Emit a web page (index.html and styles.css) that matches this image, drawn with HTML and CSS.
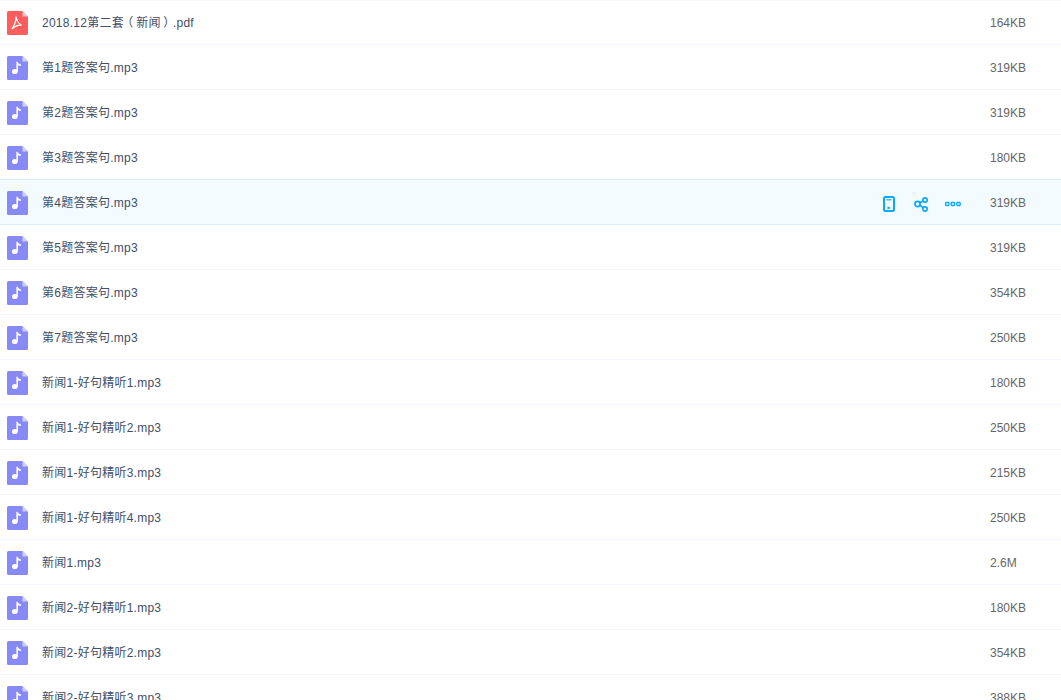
FILE: index.html
```html
<!DOCTYPE html>
<html lang="zh-CN">
<head>
<meta charset="utf-8">
<title>文件列表</title>
<link rel="stylesheet" href="styles.css">
</head>
<body>
<svg class="sprites" width="0" height="0" aria-hidden="true">
  <symbol id="pdf" viewBox="0 0 21 24">
    <path d="M1.500 0H15.500L21 5.500V22.500A1.500 1.500 0 0 1 19.500 24H1.500A1.500 1.500 0 0 1 0 22.500V1.500A1.500 1.500 0 0 1 1.500 0Z" fill="#ff5d5d"/>
    <path d="M15.500 0L21 5.500H15.500Z" fill="#ffc4c4"/>
    <path d="M9 5.500C9.200 9 8 13.500 5 18C8 15 11 14 14.500 14.200C12 13 9.800 10 9 5.500Z" fill="none" stroke="#fff" stroke-width="1.200"/>
  </symbol>
  <symbol id="mp3" viewBox="0 0 21 24">
    <path d="M1.500 0H15.500L21 5.500V22.500A1.500 1.500 0 0 1 19.500 24H1.500A1.500 1.500 0 0 1 0 22.500V1.500A1.500 1.500 0 0 1 1.500 0Z" fill="#8789f5"/>
    <path d="M15.500 0L21 5.500H15.500Z" fill="#cfd0fb"/>
    <ellipse cx="7.800" cy="15.500" rx="2.800" ry="2.600" fill="#fff"/>
    <path d="M9.400 15.500V5.700H10.600C11 7.200 12.300 8.200 13.800 8.200V10C12.700 10 11.700 9.500 11 8.900V15.500Z" fill="#fff"/>
  </symbol>
</svg>
<main class="list">
  <div class="row"><svg class="ficon"><use href="#pdf"/></svg><span class="name">2018.12第二套<span class="paren">（</span>新闻<span class="paren">）</span>.pdf</span><span class="size">164KB</span></div>
  <div class="row"><svg class="ficon"><use href="#mp3"/></svg><span class="name">第1题答案句.mp3</span><span class="size">319KB</span></div>
  <div class="row"><svg class="ficon"><use href="#mp3"/></svg><span class="name">第2题答案句.mp3</span><span class="size">319KB</span></div>
  <div class="row"><svg class="ficon"><use href="#mp3"/></svg><span class="name">第3题答案句.mp3</span><span class="size">180KB</span></div>
  <div class="row active"><svg class="ficon"><use href="#mp3"/></svg><span class="name">第4题答案句.mp3</span>
    <span class="actions">
      <svg class="act" viewBox="0 0 16 16" fill="none" stroke="#09a9fb" stroke-width="2"><rect x="3" y="1" width="10" height="14" rx="1.500"/><path d="M5.500 3.800H10.500" stroke-width="1.200"/><path d="M6.500 10.300L10 12L6.500 13.500Z" fill="#09a9fb" stroke="none"/></svg>
      <svg class="act" viewBox="0 0 16 16" fill="none" stroke="#09a9fb" stroke-width="1.700"><circle cx="4.500" cy="8" r="2.600"/><circle cx="12" cy="4" r="2.200"/><circle cx="12" cy="13" r="2.200"/><path d="M6.800 6.800L10 5M6.800 9.300L10.200 11.600"/></svg>
      <svg class="act" viewBox="0 0 16 16" fill="none" stroke="#09a9fb" stroke-width="1.300"><rect x="0.600" y="6.500" width="3.400" height="3" rx="0.800"/><rect x="6.200" y="6.500" width="3.400" height="3" rx="0.800"/><rect x="11.800" y="6.500" width="3.400" height="3" rx="0.800"/></svg>
    </span>
    <span class="size">319KB</span></div>
  <div class="row"><svg class="ficon"><use href="#mp3"/></svg><span class="name">第5题答案句.mp3</span><span class="size">319KB</span></div>
  <div class="row"><svg class="ficon"><use href="#mp3"/></svg><span class="name">第6题答案句.mp3</span><span class="size">354KB</span></div>
  <div class="row"><svg class="ficon"><use href="#mp3"/></svg><span class="name">第7题答案句.mp3</span><span class="size">250KB</span></div>
  <div class="row"><svg class="ficon"><use href="#mp3"/></svg><span class="name">新闻1-好句精听1.mp3</span><span class="size">180KB</span></div>
  <div class="row"><svg class="ficon"><use href="#mp3"/></svg><span class="name">新闻1-好句精听2.mp3</span><span class="size">250KB</span></div>
  <div class="row"><svg class="ficon"><use href="#mp3"/></svg><span class="name">新闻1-好句精听3.mp3</span><span class="size">215KB</span></div>
  <div class="row"><svg class="ficon"><use href="#mp3"/></svg><span class="name">新闻1-好句精听4.mp3</span><span class="size">250KB</span></div>
  <div class="row"><svg class="ficon"><use href="#mp3"/></svg><span class="name">新闻1.mp3</span><span class="size">2.6M</span></div>
  <div class="row"><svg class="ficon"><use href="#mp3"/></svg><span class="name">新闻2-好句精听1.mp3</span><span class="size">180KB</span></div>
  <div class="row"><svg class="ficon"><use href="#mp3"/></svg><span class="name">新闻2-好句精听2.mp3</span><span class="size">354KB</span></div>
  <div class="row"><svg class="ficon"><use href="#mp3"/></svg><span class="name">新闻2-好句精听3.mp3</span><span class="size">388KB</span></div>
</main>
</body>
</html>
```
FILE: styles.css
```css
html, body {
  margin: 0;
  padding: 0;
  height: 700px;
  overflow: hidden;
  background: #fff;
}
.sprites {
  position: absolute;
}
.list {
  font-family: "Liberation Sans", "Noto Sans CJK SC", sans-serif;
  font-size: 12px;
  line-height: 20px;
}
.row {
  display: flex;
  align-items: center;
  box-sizing: border-box;
  height: 45px;
  padding-left: 7px;
  border-bottom: 1px solid #f3f6fc;
}
.row:first-child {
  box-shadow: inset 0 1px 0 #f5f7fc;
}
.row.active {
  background: #f4fbff;
  border-bottom-color: #daeefd;
  box-shadow: 0 -1px 0 #daeefd;
}
.ficon {
  width: 21px;
  height: 24px;
  flex: none;
  margin-top: 2px;
}
.name {
  margin-left: 14px;
  margin-top: 2px;
  flex: 1;
  color: #424e67;
  letter-spacing: 0.25px;
}
.paren {
  font-feature-settings: "palt";
  padding: 0 3px;
}
.actions {
  display: flex;
  gap: 16px;
  margin-right: 29px;
  margin-top: 4px;
}
.act {
  width: 16px;
  height: 16px;
  display: block;
}
.size {
  width: 71px;
  flex: none;
  margin-top: 2px;
  color: #666;
}
```
